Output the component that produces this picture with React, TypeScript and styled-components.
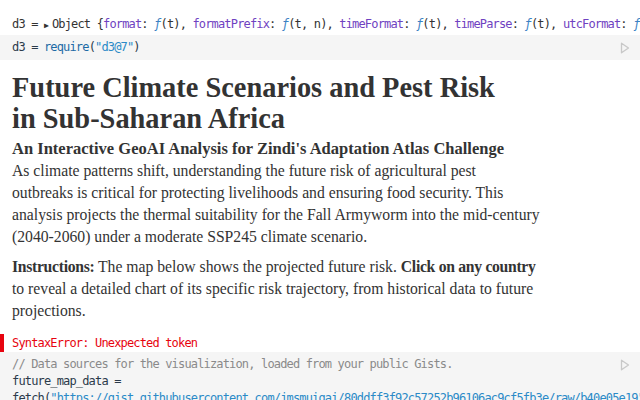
import React, { FC } from "react";
import styled, { createGlobalStyle } from "styled-components";

const GlobalStyle = createGlobalStyle`
  html, body {
    margin: 0;
    padding: 0;
    background: #ffffff;
    overflow: hidden;
  }
`;

const Page = styled.div`
  width: 640px;
  height: 400px;
  overflow: hidden;
  padding-top: 13px;
  box-sizing: border-box;
`;

const mono = `"DejaVu Sans Mono", "Liberation Mono", monospace`;
const serif = `"Liberation Serif", "DejaVu Serif", serif`;

const OutputLine = styled.div`
  padding: 0 12px;
  height: 22px;
  line-height: 22px;
  font-family: ${mono};
  font-size: 12px;
  letter-spacing: -0.84px;
  color: #333;
  white-space: nowrap;
  overflow: hidden;
`;

const CodeCell = styled.div`
  position: relative;
  background: #f5f5f5;
  padding: 4px 12px;
  font-family: ${mono};
  font-size: 12px;
  letter-spacing: -0.84px;
  line-height: 17px;
  color: #2b3a4a;
  white-space: nowrap;
  overflow: hidden;
`;

const RunButton = styled.span`
  position: absolute;
  right: 10px;
  top: 7px;
  width: 10px;
  height: 12px;
`;

const Key = styled.span`
  color: #6f42c1;
`;
const Fn = styled.span`
  color: #3b82c4;
  font-style: italic;
`;
const Call = styled.span`
  color: #1d6aa5;
`;
const Str = styled.span`
  color: #2a8ac7;
`;
const Comment = styled.span`
  color: #8a8a8a;
`;
const Caret = styled.span`
  font-size: 8px;
  margin-right: 4px;
`;

const Prose = styled.div`
  padding: 12px 12px 0;
  font-family: ${serif};
  color: #333;
`;

const Title = styled.h1`
  margin: 0;
  font-size: 28.4px;
  line-height: 31px;
  font-weight: 700;
  color: #333;
`;

const Subtitle = styled.h2`
  margin: 4px 0 0;
  font-size: 16.5px;
  line-height: 22px;
  font-weight: 700;
  color: #333;
`;

const Para = styled.p`
  margin: 0;
  font-size: 15.7px;
  line-height: 22px;
  color: #333;
  white-space: nowrap;
  & + & {
    margin-top: 8px;
  }
  b {
    letter-spacing: -0.3px;
  }
`;

const ErrorLine = styled.div`
  position: relative;
  margin-top: 12px;
  padding: 0 12px;
  height: 18px;
  line-height: 18px;
  font-family: ${mono};
  font-size: 12px;
  letter-spacing: -0.84px;
  color: #e7040f;
  &:before {
    content: "";
    position: absolute;
    left: 0;
    top: 0;
    width: 4px;
    height: 18px;
    background: #e7040f;
  }
`;

const Run: FC = () => (
  <RunButton>
    <svg width="10" height="12" viewBox="0 0 10 12">
      <path d="M1.5 1.2 L8.5 6 L1.5 10.8 Z" fill="none" stroke="#c8c8c8" strokeWidth="1.3" strokeLinejoin="round" />
    </svg>
  </RunButton>
);

const App: FC = () => {
  return (
    <Page>
      <GlobalStyle />
      <OutputLine>
        d3 = <Caret>▶</Caret>Object {"{"}
        <Key>format</Key>: <Fn>ƒ</Fn>(t), <Key>formatPrefix</Key>: <Fn>ƒ</Fn>(t, n),{" "}
        <Key>timeFormat</Key>: <Fn>ƒ</Fn>(t), <Key>timeParse</Key>: <Fn>ƒ</Fn>(t),{" "}
        <Key>utcFormat</Key>: <Fn>ƒ</Fn>(t), <Key>utcParse</Key>: <Fn>ƒ</Fn>(t)
      </OutputLine>
      <CodeCell>
        d3 = <Call>require</Call>(<Str>"d3@7"</Str>)
        <Run />
      </CodeCell>
      <Prose>
        <Title>
          Future Climate Scenarios and Pest Risk
          <br />
          in Sub-Saharan Africa
        </Title>
        <Subtitle>An Interactive GeoAI Analysis for Zindi's Adaptation Atlas Challenge</Subtitle>
        <Para>
          As climate patterns shift, understanding the future risk of agricultural pest
          <br />
          outbreaks is critical for protecting livelihoods and ensuring food security. This
          <br />
          analysis projects the thermal suitability for the Fall Armyworm into the mid-century
          <br />
          (2040-2060) under a moderate SSP245 climate scenario.
        </Para>
        <Para>
          <b>Instructions:</b> The map below shows the projected future risk. <b>Click on any country</b>
          <br />
          to reveal a detailed chart of its specific risk trajectory, from historical data to future
          <br />
          projections.
        </Para>
      </Prose>
      <ErrorLine>SyntaxError: Unexpected token</ErrorLine>
      <CodeCell>
        <Comment>// Data sources for the visualization, loaded from your public Gists.</Comment>
        <br />
        future_map_data =
        <br />
        fetch(
        <Str>
          "https://gist.githubusercontent.com/jmsmuigai/80ddff3f92c57252b96106ac9cf5fb3e/raw/b40e05e19"
        </Str>
        <Run />
      </CodeCell>
    </Page>
  );
};

export default App;
